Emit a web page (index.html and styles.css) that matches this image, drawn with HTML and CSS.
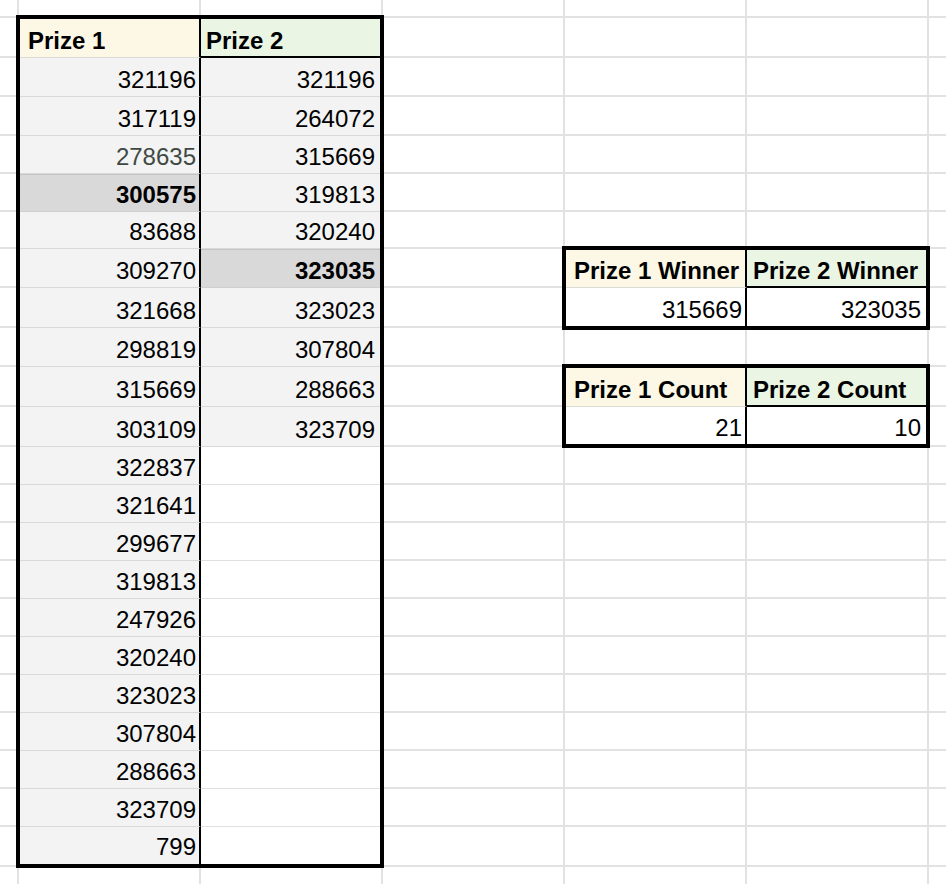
FILE: index.html
```html
<!DOCTYPE html>
<html lang="en">
<head>
<meta charset="utf-8">
<title>Prize draw</title>
<link rel="stylesheet" href="styles.css">
</head>
<body>
<div class="sheet">
  <div class="tbl tbl-main">
    <div class="cell head h1 c1">Prize 1</div><div class="cell head h2 c2">Prize 2</div>
    <div class="cell num c1 fill">321196</div><div class="cell num c2 fill">321196</div>
    <div class="cell num c1 fill">317119</div><div class="cell num c2 fill">264072</div>
    <div class="cell num c1 fill muted">278635</div><div class="cell num c2 fill">315669</div>
    <div class="cell num c1 sel">300575</div><div class="cell num c2 fill">319813</div>
    <div class="cell num c1 fill">83688</div><div class="cell num c2 fill">320240</div>
    <div class="cell num c1 fill">309270</div><div class="cell num c2 sel">323035</div>
    <div class="cell num c1 fill">321668</div><div class="cell num c2 fill">323023</div>
    <div class="cell num c1 fill">298819</div><div class="cell num c2 fill">307804</div>
    <div class="cell num c1 fill">315669</div><div class="cell num c2 fill">288663</div>
    <div class="cell num c1 fill">303109</div><div class="cell num c2 fill">323709</div>
    <div class="cell num c1 fill">322837</div><div class="cell num c2"></div>
    <div class="cell num c1 fill">321641</div><div class="cell num c2"></div>
    <div class="cell num c1 fill">299677</div><div class="cell num c2"></div>
    <div class="cell num c1 fill">319813</div><div class="cell num c2"></div>
    <div class="cell num c1 fill">247926</div><div class="cell num c2"></div>
    <div class="cell num c1 fill">320240</div><div class="cell num c2"></div>
    <div class="cell num c1 fill">323023</div><div class="cell num c2"></div>
    <div class="cell num c1 fill">307804</div><div class="cell num c2"></div>
    <div class="cell num c1 fill">288663</div><div class="cell num c2"></div>
    <div class="cell num c1 fill">323709</div><div class="cell num c2"></div>
    <div class="cell num c1 fill end">799</div><div class="cell num c2 end"></div>
  </div>
  <div class="side">
    <div class="tbl tbl-small tbl-winner">
      <div class="cell head h1 c1">Prize 1 Winner</div><div class="cell head h2 c2">Prize 2 Winner</div>
      <div class="cell num c1 val">315669</div><div class="cell num c2 val">323035</div>
    </div>
    <div class="tbl tbl-small tbl-count">
      <div class="cell head h1 c1">Prize 1 Count</div><div class="cell head h2 c2">Prize 2 Count</div>
      <div class="cell num c1 val">21</div><div class="cell num c2 val">10</div>
    </div>
  </div>
</div>
</body>
</html>
```
FILE: styles.css
```css
html, body {
  margin: 0;
  padding: 0;
  background: #fff;
}

.sheet {
  width: 946px;
  height: 884px;
  box-sizing: border-box;
  overflow: hidden;
  display: flex;
  align-items: flex-start;
  padding: 15px 0 0 16px;
  font-family: "Liberation Sans", Arial, sans-serif;
  background-color: #fff;
  background-image:
    linear-gradient(to right, #e2e2e2 2px, transparent 2px),
    linear-gradient(to bottom,
      transparent 16px, #e2e2e2 16px 18px,
      transparent 18px 56px, #e2e2e2 56px 58px,
      transparent 58px 95px, #e2e2e2 95px 97px,
      transparent 97px 134px, #e2e2e2 134px 136px,
      transparent 136px 172px, #e2e2e2 172px 174px,
      transparent 174px 210px, #e2e2e2 210px 212px,
      transparent 212px 247px, #e2e2e2 247px 249px,
      transparent 249px 286px, #e2e2e2 286px 288px,
      transparent 288px 326px, #e2e2e2 326px 328px,
      transparent 328px 365px, #e2e2e2 365px 367px,
      transparent 367px 405px, #e2e2e2 405px 407px,
      transparent 407px 445px, #e2e2e2 445px 447px,
      transparent 447px 483px, #e2e2e2 483px 485px,
      transparent 485px 521px, #e2e2e2 521px 523px,
      transparent 523px 559px, #e2e2e2 559px 561px,
      transparent 561px 597px, #e2e2e2 597px 599px,
      transparent 599px 635px, #e2e2e2 635px 637px,
      transparent 637px 673px, #e2e2e2 673px 675px,
      transparent 675px 711px, #e2e2e2 711px 713px,
      transparent 713px 749px, #e2e2e2 749px 751px,
      transparent 751px 787px, #e2e2e2 787px 789px,
      transparent 789px 825px, #e2e2e2 825px 827px,
      transparent 827px 865px, #e2e2e2 865px 867px,
      transparent 867px);
  background-size: 182px 100%, 100% 100%;
  background-position: 17px 0, 0 0;
  background-repeat: repeat-x, no-repeat;
}

.tbl {
  display: grid;
  grid-template-columns: 181px 179px;
  box-sizing: border-box;
  width: 368px;
  border: 4px solid #000;
  background: #fff;
  flex: none;
}

.tbl-main {
  height: 853px;
  grid-template-rows: 38.5px 39px 39px 38px 38px 37px 39px 40px 39px 40px 40px repeat(10, 38px) 37.5px;
}

.side {
  display: flex;
  flex-direction: column;
  margin-left: 178px;
}

.tbl-small {
  height: 84px;
}

.tbl-winner {
  margin-top: 231px;
  grid-template-rows: 37.5px 38.5px;
}

.tbl-count {
  margin-top: 34px;
  grid-template-rows: 38.5px 37.5px;
}

.cell {
  display: flex;
  align-items: flex-end;
  box-sizing: border-box;
  min-width: 0;
  overflow: hidden;
  white-space: nowrap;
  border-bottom: 1px solid #e0e0e0;
  padding-bottom: 3.3px;
  font-size: 24px;
  line-height: 24px;
  color: #000;
}

.c1 {
  border-right: 2px solid #000;
}

.num {
  justify-content: flex-end;
}

.c1.num {
  padding-right: 3px;
}

.c2.num {
  padding-right: 5px;
}

.head {
  font-weight: 700;
}

.h1 {
  background: #fcf8e5;
  padding-left: 8px;
  border-bottom-color: #dcdcd6;
}

.h2 {
  background: #eaf5e4;
  padding-left: 5px;
  border-bottom: 2px solid #000;
  padding-bottom: 2.3px;
}

.tbl-small .h2 {
  padding-left: 6px;
}

.fill {
  background: #f3f3f3;
  border-bottom-color: #d9d9d9;
}

.sel {
  background: #d9d9d9;
  border-bottom-color: #cfcfcf;
  font-weight: 700;
  box-shadow: inset 0 1px 0 #c4c4c4;
}

.muted {
  color: #3f4944;
}

.end {
  border-bottom: none;
  padding-bottom: 5.5px;
}

.val {
  border-bottom: none;
  background: #fff;
  padding-bottom: 4.3px;
}
```
